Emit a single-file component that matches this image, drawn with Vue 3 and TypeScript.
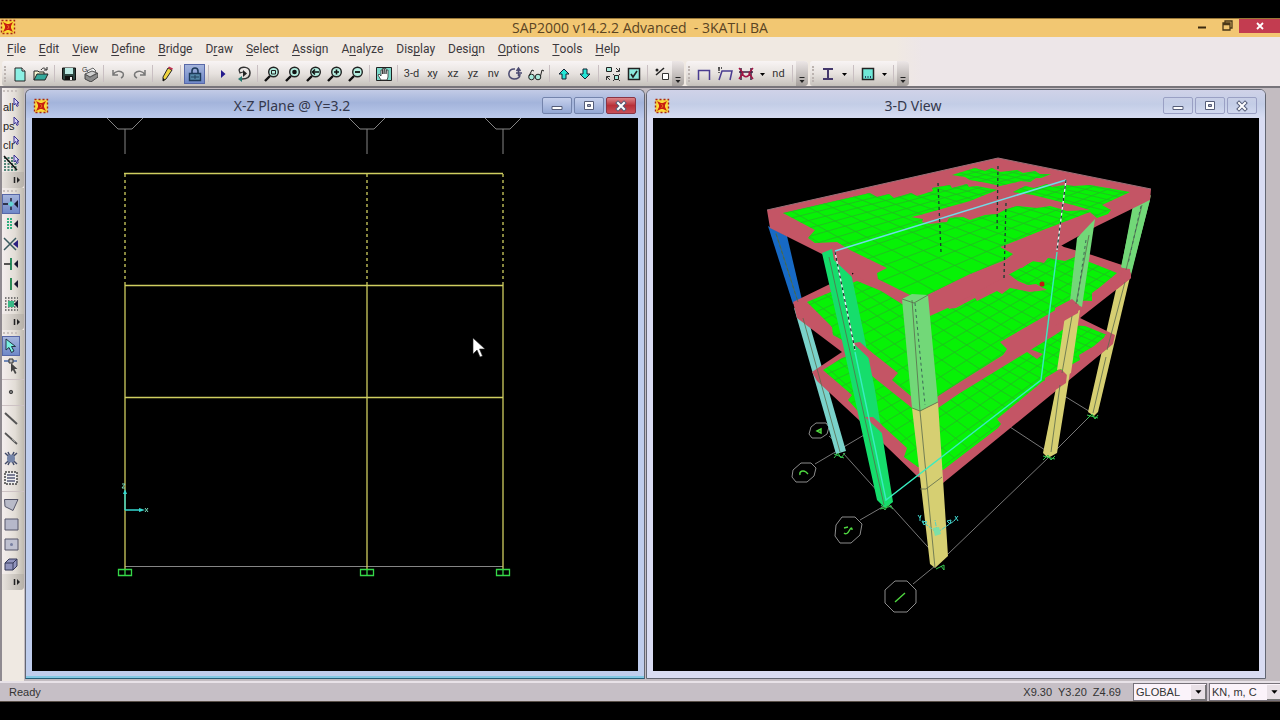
<script setup lang="ts">
import { ref } from 'vue'

type Tool = { id: string; label: string; icon?: string; text?: string; kind?: 'sep' | 'drop'; on?: boolean; narrow?: boolean }
type Point = [number, number]

const sep = (id: string): Tool => ({ id, label: '', kind: 'sep' })
const drop = (id: string): Tool => ({ id, label: 'More choices', kind: 'drop' })

const lens = (inner: string) =>
  `<path d="M6 10 1 15" stroke="#111" stroke-width="2.4"/><circle cx="9.5" cy="6" r="4.8" fill="#b5eee0" stroke="#222" stroke-width="1.4"/>${inner}`
const pick =
  '<path d="M11 0v7l1.500-1.500 1.500 3 1.300-1-1.300-2.500h2z" fill="#d8d4f8" stroke="#3a3290" stroke-width="1"/>'

const menus: [string, string, string][] = [
  ['', 'F', 'ile'], ['', 'E', 'dit'], ['', 'V', 'iew'], ['', 'D', 'efine'], ['', 'B', 'ridge'], ['D', 'r', 'aw'], ['', 'S', 'elect'],
  ['', 'A', 'ssign'], ['A', 'n', 'alyze'], ['Dis', 'p', 'lay'], ['Desi', 'g', 'n'], ['', 'O', 'ptions'], ['', 'T', 'ools'], ['', 'H', 'elp'],
]

const toolGroups: Tool[][] = [
  [
    { id: 'new', label: 'New model', icon: '<path d="M3 2h7l3 3v10H3z" fill="#8cf0e4" stroke="#222"/><path d="M10 2v3h3" fill="#fff" stroke="#222"/>' },
    { id: 'open', label: 'Open', icon: '<path d="M1 14V5h4l1 1h5v2" fill="#f4f4d0" stroke="#222"/><path d="M1 14l3-6h11l-3 6z" fill="#35a89a" stroke="#222"/><path d="M8 4c2-3 4-2 5-.5M14 1v3h-3" fill="none" stroke="#222"/>' },
    sep('s1'),
    { id: 'save', label: 'Save', icon: '<path d="M1.500 2h13v12h-12l-1-1z" fill="#2d4540" stroke="#111"/><path d="M4 2h8v6H4z" fill="#b9e9e2"/><path d="M4 10h8v4H4z" fill="#111"/><path d="M9 11h2v3H9z" fill="#eee"/>' },
    { id: 'print', label: 'Print', icon: '<path d="M5 5l6-3 3 3-5 4z" fill="#f3f3f3" stroke="#666"/><path d="M3 8l5 3 8-4v4l-7 5-6-3z" fill="#8b8b8b" stroke="#444"/><path d="M3 8l7-3 5 2-7 4z" fill="#cfcfcf" stroke="#555"/><text x="0" y="6" font-size="7" font-family="Liberation Sans, sans-serif" fill="#333">G</text>' },
    sep('s2'),
    { id: 'undo', label: 'Undo', icon: '<path d="M3 4v5h5M3 9c2-4 7-5 10-2 1 2 0 4-2 5" fill="none" stroke="#777" stroke-width="1.500"/>' },
    { id: 'redo', label: 'Redo', icon: '<path d="M14 4v5H9M14 9C12 5 7 4 4 7 3 9 4 11 6 12" fill="none" stroke="#777" stroke-width="1.500"/>' },
    sep('s3'),
    { id: 'pencil', label: 'Edit', icon: '<path d="M9 2l4 2-6 9-3 2v-4z" fill="#f0d440" stroke="#222"/><path d="M9 2l1-1.500 4 2L13 4z" fill="#c03050"/><path d="M4 15v-3l2 1.500z" fill="#111"/>' },
    sep('s4'),
    { id: 'lock', label: 'Lock model', on: true, icon: '<path d="M5 8V5c0-4 6-4 6 0v3" fill="none" stroke="#1d3a5a" stroke-width="1.600"/><path d="M2.500 7.500h11v7h-11z" fill="#5688a8" stroke="#1d3a5a" stroke-width="1.400"/><path d="M8 9v4M4 11h8" stroke="#23405c"/>' },
    sep('s5'),
    { id: 'run', label: 'Run analysis', icon: '<path d="M6 4l4.500 4L6 12z" fill="#241a8c"/>' },
    { id: 'animate', label: 'Run animation', icon: '<path d="M3 4c2-4 11-4 11 3 0 5-4 6-8 6" fill="none" stroke="#333" stroke-width="1.500"/><path d="M3 4l1 3 3-1" fill="none" stroke="#333" stroke-width="1.300"/><path d="M7 4l4 3.500L7 11z" fill="#222"/><path d="M2 13l4-3v6z" fill="#27776d"/>' },
    sep('s6'),
    { id: 'zoom-window', label: 'Zoom window', icon: lens('<path d="M7.500 4.500h4v3.500h-4z" fill="none" stroke="#222"/>') },
    { id: 'zoom-full', label: 'Restore full view', icon: lens('<circle cx="9.500" cy="6" r="2.300" fill="#111"/>') },
    { id: 'zoom-previous', label: 'Previous zoom', icon: lens('<path d="M13 6H7M9 3.500 6.500 6 9 8.500" fill="none" stroke="#111" stroke-width="1.500"/>') },
    { id: 'zoom-in', label: 'Zoom in', icon: lens('<path d="M7 6h5M9.500 3.500v5" stroke="#111" stroke-width="1.600"/>') },
    { id: 'zoom-out', label: 'Zoom out', icon: lens('<path d="M7 6h5" stroke="#111" stroke-width="1.800"/>') },
    sep('s7'),
    { id: 'pan', label: 'Pan', icon: '<path d="M.5 1.500h15v13H.5z" fill="#7ad8c8" stroke="#222"/><path d="M5 14 2 9l1-1 2 2V4h1.500v4V2.500H8V8l.5-5.500H10V8l.5-4H12v7l-1 3z" fill="#fff" stroke="#333" stroke-width=".8"/>' },
    sep('s8'),
    { id: 'v3d', label: '3-D view', text: '3-d' },
    { id: 'vxy', label: 'XY view', text: 'xy' },
    { id: 'vxz', label: 'XZ view', text: 'xz', narrow: true },
    { id: 'vyz', label: 'YZ view', text: 'yz', narrow: true },
    { id: 'vnv', label: 'Named view', text: 'nv' },
    { id: 'rotate', label: 'Rotate view', icon: '<path d="M8 3C0 2 0 13 7 13c4 0 6-2 6-5" fill="none" stroke="#4a4a70" stroke-width="1.500"/><path d="M9 7h6M11.500 3v7M9.500 5l2-3 2 3" fill="none" stroke="#4a4a70" stroke-width="1.500"/>' },
    { id: 'perspective', label: 'Perspective', icon: '<circle cx="3.500" cy="11" r="2.800" fill="#a6e8da" stroke="#222"/><circle cx="10" cy="11" r="2.800" fill="#a6e8da" stroke="#222"/><path d="M1 10 4 4l2 1M12.500 10l1.500-6 2 1" fill="none" stroke="#222"/>' },
    sep('s9'),
    { id: 'up', label: 'Move up', icon: '<path d="M8 3l5 5h-3v5H6V8H3z" fill="#25e5d5" stroke="#123"/>' },
    { id: 'down', label: 'Move down', icon: '<path d="M8 13l5-5h-3V3H6v5H3z" fill="#25e5d5" stroke="#123"/>' },
    sep('s10'),
    { id: 'shrink', label: 'Object shrink', icon: '<path d="M1.500 1.500h5v4h-5zM9.500 9.500h4v4h-4z" fill="#a6e8da" stroke="#222"/><path d="M11 2l3 3M14.500 2v3.500H11M5 14l-3-3M1.500 14v-3.500H5" fill="none" stroke="#333"/><path d="M8 8l1.500 1.500M15 8l-1.500 1.500M8 15l1.500-1.500M15 15l-1.500-1.500" stroke="#333"/>' },
    { id: 'options', label: 'Display options', icon: '<path d="M2.500 2.500h11v11h-11z" fill="#8ceade" stroke="#222" stroke-width="1.500"/><path d="M5 8l2 3 4-6" fill="none" stroke="#222" stroke-width="1.600"/>' },
    sep('s11'),
    { id: 'assign', label: 'Assign to group', icon: '<path d="M10 2 2 9" stroke="#222" stroke-width="1.500"/><circle cx="3" cy="4" r="1.500" fill="#222"/><path d="M8.500 7.500h6v6h-6z" fill="#fff" stroke="#333"/>' },
  ],
  [
    { id: 'undeformed', label: 'Undeformed shape', icon: '<path d="M2.500 14V4.500h11V14" fill="none" stroke="#4a3c90" stroke-width="1.500"/>' },
    { id: 'deformed', label: 'Deformed shape', icon: '<path d="M2 14 5 5h10l-2 9" fill="none" stroke="#4a3c90" stroke-width="1.500"/><path d="M1 2h4M2 3v4" stroke="#222" stroke-width="1.300" stroke-dasharray="2 1"/>' },
    { id: 'forces', label: 'Frame forces', icon: '<path d="M3 2v12M13 2v12M1 6h14" stroke="#3a2040" stroke-width="1.500"/><path d="M1 2l4 5-4 6M15 2l-4 5 4 6M4 7c2 5 6 5 8 0" fill="none" stroke="#a31545" stroke-width="1.400"/>' },
    drop('d1'),
    { id: 'nd', label: 'Named display', text: 'nd' },
    sep('s12'),
  ],
  [
    { id: 'frame', label: 'Steel frame design', icon: '<path d="M3 3h10M3 13h10M8 3v10" stroke="#44386c" stroke-width="2"/>' },
    drop('d2'),
    sep('s13'),
    { id: 'concrete', label: 'Concrete frame design', icon: '<path d="M2.500 2.500h11v11h-11z" fill="#6fe8d8" stroke="#222" stroke-width="1.500"/><path d="M5 11h1M7.500 11h1M10 11h1" stroke="#114" stroke-width="1.500"/>' },
    drop('d3'),
    sep('s14'),
  ],
]

const tag = (t: string) => `<text x="0" y="13" font-size="11" font-family="Liberation Sans, sans-serif" fill="#222">${t}</text>${pick}`
const node = '<path d="M15 4v8l-4-4z" fill="#181830"/>'
const sideGroups: Tool[][] = [
  [
    { id: 'all', label: 'Select all', icon: tag('all') },
    { id: 'ps', label: 'Previous selection', icon: tag('ps') },
    { id: 'clr', label: 'Clear selection', icon: tag('clr') },
    { id: 'line-select', label: 'Select by line', icon: '<path d="M1 3h13M1 6h13M1 9h13M1 12h13M1 15h13" stroke="#1c6656" stroke-width="1.500" stroke-dasharray="2 1.500"/><path d="M1 1l13 14" stroke="#111" stroke-width="1.500"/>' + pick },
  ],
  [
    { id: 'snap-joint', label: 'Snap to points', on: true, icon: '<path d="M0 8h5M8 2v4M8 10v4" stroke="#112" stroke-width="1.300"/><path d="M8 5l3 3-3 3-3-3z" fill="#62d4d4"/>' + node },
    { id: 'snap-mid', label: 'Snap to ends', icon: '<path d="M5 2v12M8 2v12" stroke="#30b080" stroke-width="2" stroke-dasharray="2 1"/>' + node },
    { id: 'snap-cross', label: 'Snap to intersections', icon: '<path d="M1 2l12 12M1 14 13 2" stroke="#3a5a60" stroke-width="1.500"/><path d="M15 4v8l-5-4z" fill="#2b2080"/>' },
    { id: 'snap-perp', label: 'Snap perpendicular', icon: '<path d="M1 8h7" stroke="#222" stroke-width="1.500"/><path d="M8 2v12" stroke="#178050" stroke-width="1.800"/>' + node },
    { id: 'snap-line', label: 'Snap to lines', icon: '<path d="M8 2v12" stroke="#188048" stroke-width="1.800"/>' + node },
    { id: 'snap-grid', label: 'Snap to fine grid', icon: '<path d="M2 2h13M2 5h13M2 8h13M2 11h13M2 14h13" stroke="#555" stroke-width="1.500" stroke-dasharray="1.500 1.500"/><path d="M5 5h6v6H5z" fill="#38b886"/>' + node },
  ],
  [
    { id: 'pointer', label: 'Pointer', on: true, icon: '<path d="M3 1v11l3-2.500 2.500 5 2.500-1.500-2.500-4.500h4z" fill="#79f0e0" stroke="#234"/>' },
    { id: 'reshape', label: 'Reshape', icon: '<path d="M1 3h13" stroke="#4668a8" stroke-width="1.500"/><path d="M6 1h4v4H6z" fill="#bbb" stroke="#333"/><path d="M8 5v9l2-2 2 4 1.500-1-2-4h3z" fill="#444"/>' },
    sep('t1'),
    { id: 'joint', label: 'Draw joint', icon: '<circle cx="8" cy="8" r="1.700" fill="#777" stroke="#444"/>' },
    sep('t2'),
    { id: 'draw-frame', label: 'Draw frame', icon: '<path d="M2 3l12 11" stroke="#555" stroke-width="2"/>' },
    { id: 'quick-frame', label: 'Quick draw frame', icon: '<path d="M2 3l12 11" stroke="#555" stroke-width="1.700"/><path d="M9 9l3 3" stroke="#999"/>' },
    { id: 'braces', label: 'Quick draw braces', icon: '<path d="M2 3l12 11M2 14 14 3M5 2l6 13M11 2 5 15" stroke="#424a68" stroke-width="1.500"/><circle cx="8" cy="8.500" r="4" fill="#7484a8"/>' },
    { id: 'secondary', label: 'Quick draw secondary beams', icon: '<path d="M2 2h12v12H2z" fill="#eee" stroke="#444" stroke-width="1.500" stroke-dasharray="2 1"/><path d="M4 5h8M4 8h8M4 11h8" stroke="#555a78" stroke-width="1.400"/>' },
    sep('t3'),
    { id: 'poly', label: 'Draw polygon area', icon: '<path d="M1.500 3.500H15L10 14.500 2 10.500z" fill="#b8bac8" stroke="#555568"/>' },
    { id: 'rect', label: 'Draw rectangular area', icon: '<path d="M2 3h13v11H2z" fill="#b6b8ca" stroke="#555568"/>' },
    { id: 'quick-area', label: 'Quick draw area', icon: '<path d="M2 3h13v11H2z" fill="#bfc1d0" stroke="#555568"/><circle cx="8.500" cy="8.500" r="1.500" fill="#777fa0"/>' },
    { id: 'solid', label: 'Draw solid', icon: '<path d="M2 7l4-4h8v7l-4 4H2z" fill="#9093bc" stroke="#353858"/><path d="M2 7h8v7M10 7l4-4" fill="none" stroke="#353858"/>' },
  ],
]

// Square-to-quad projection used for the slab mesh.
function meshPath(quad: Point[], nu: number, nv: number): string {
  const [[x0, y0], [x1, y1], [x2, y2], [x3, y3]] = quad
  const dx1 = x1 - x2, dx2 = x3 - x2, sx = x0 - x1 + x2 - x3
  const dy1 = y1 - y2, dy2 = y3 - y2, sy = y0 - y1 + y2 - y3
  const det = dx1 * dy2 - dx2 * dy1
  const g = (sx * dy2 - dx2 * sy) / det
  const h = (dx1 * sy - sx * dy1) / det
  const at = (u: number, v: number) => {
    const w = g * u + h * v + 1
    const x = ((x1 - x0 + g * x1) * u + (x3 - x0 + h * x3) * v + x0) / w
    const y = ((y1 - y0 + g * y1) * u + (y3 - y0 + h * y3) * v + y0) / w
    return `${x.toFixed(1)} ${y.toFixed(1)}`
  }
  let d = ''
  for (let i = 0; i <= nu; i++) d += `M${at(i / nu, 0)}L${at(i / nu, 1)}`
  for (let j = 0; j <= nv; j++) d += `M${at(0, j / nv)}L${at(1, j / nv)}`
  return d
}

const slabs = [
  {
    id: 'first',
    outline: 'M812 372 842 352 900 330 1050 300 1080 318 1115 335 1113 344 1068 381 943 483 918 477 860 421 817 381Z',
    shell: 'M823 370 842 358 900 340 1000 346 1027 352 1037 359 1043 354 1030 349 1060 325 1085 326 1107 335 1094 346 1079 355 1080 360 1060 371 1042 382 997 419 1001 424 998 428 960 457 943 470 918 467 904 457 907 448 873 417 857 410 848 400 852 395Z',
    mesh: meshPath([[812, 372], [1000, 290], [1115, 336], [925, 480]], 20, 13),
  },
  {
    id: 'second',
    outline: 'M793 302 828 285 1000 210 1064 247 1092 255 1131 268 1131 278 1080 318 1055 335 960 393 938 408 912 408 842 352 797 318Z',
    shell: 'M807 302 857 281 930 311 947 305 949 309 956 308 975 298 977 301 997 291 1002 294 1010 288 1030 292 1047 290 1036 284 1028 285 1018 281 1010 275 1004 272 1012 266 1022 268 1032 261 1044 263 1048 258 1065 261 1075 257 1092 263 1117 273 1100 287 1092 293 1092 301 1073 300 1000 342 1007 349 1003 355 960 382 935 398 912 397 892 380 898 373 860 343 848 343 833 335 832 327Z',
    mesh: meshPath([[793, 302], [1000, 215], [1131, 270], [925, 404]], 20, 13),
  },
  {
    id: 'roof',
    outline: 'M767 210 998 158 1151 189 1150 200 1097 226 1077 237 950 307 930 316 902 304 822 254 770 228Z',
    shell: 'M783 213 870 193 877 197 889 194 894 198 911 193 917 196 933 191 932 188 950 185 952 188 967 184 969 187 977 186 997 190 970 201 920 215 903 219 911 217 923 219 922 222 930 224 947 222 949 218 963 217 970 220 985 215 997 214 1007 209 1017 206 1037 208 1050 206 1067 211 1090 210 1073 205 1033 195 1013 192 1025 186 1034 188 1047 184 1052 187 1065 185 1074 186 1090 185 1130 192 1102 205 1111 210 1108 214 1097 218 1090 212 1043 230 1000 247 1013 254 1005 260 970 274 927 295 910 295 878 279 877 273 887 268 850 250 837 242 815 243 808 238 815 230Z M952 175 975 168 985 171 992 168 1000 172 1017 170 1023 173 1035 171 1040 174 1051 174 1041 178 1036 178 1030 182 1021 181 1000 186 987 183 970 180 965 177Z',
    mesh: meshPath([[767, 211], [998, 158], [1151, 190], [914, 301]], 20, 13),
  },
]

const gridLines = [125, 367, 503]
const bubbles = [
  { id: 'one', d: 'M895 581h12l9 9v13l-9 9h-13l-9-9v-13z', mark: 'M895 602l10-9' },
  { id: 'two', d: 'M842 517h13l7 7-2 11-9 8h-11l-5-7 1-11z', mark: 'M844 533c2 2 4 0 5-2s3-5 3-1M844 528l4-1' },
  { id: 'three', d: 'M801 463h10l5 5-2 8-7 6h-11l-4-5 1-7z', mark: 'M800 475c-1-4 3-5 6-3l2 2' },
  { id: 'four', d: 'M816 423h10l3 4-2 7-6 4h-9l-3-4 2-7z', mark: 'M817 431l4-2v4z' },
]

const system = ref('GLOBAL')
const units = ref('KN, m, C')
</script>

<template>
  <div class="app">
    <header class="titlebar">
      <svg class="logo" viewBox="0 0 16 16"><use href="#sap-logo" /></svg>
      <h1>SAP2000 v14.2.2 Advanced&nbsp; - 3KATLI BA</h1>
      <div class="caption">
        <button aria-label="Minimize"><svg viewBox="0 0 16 16"><path d="M4 9.500h8" stroke="#3b2a10" stroke-width="2" /></svg></button>
        <button aria-label="Restore"><svg viewBox="0 0 16 16"><path d="M4 5h7v7H4z M4 6.500h7M6 5V3h7v7h-2" fill="none" stroke="#4a3818" stroke-width="1.300" /></svg></button>
        <button class="quit" aria-label="Close"><svg viewBox="0 0 16 16"><path d="M5 5l6 6M11 5l-6 6" stroke="#fff" stroke-width="1.800" /></svg></button>
      </div>
    </header>

    <nav class="menubar">
      <button v-for="m in menus" :key="m.join('')">{{ m[0] }}<u>{{ m[1] }}</u>{{ m[2] }}</button>
    </nav>

    <div class="toolbars">
      <div v-for="(group, g) in toolGroups" :key="g" class="toolbar">
        <i class="grip"></i>
        <template v-for="t in group" :key="t.id">
          <i v-if="t.kind === 'sep'" class="sep"></i>
          <button v-else-if="t.kind === 'drop'" class="drop" :aria-label="t.label"><svg viewBox="0 0 10 10"><path d="M3 4h5L5.500 7z" /></svg></button>
          <button v-else class="tool" :class="{ on: t.on, narrow: t.narrow }" :aria-label="t.label" :title="t.label">
            <svg v-if="t.icon" viewBox="0 0 16 16" v-html="t.icon"></svg>
            <span v-else>{{ t.text }}</span>
          </button>
        </template>
        <button class="more" aria-label="Toolbar options"><svg viewBox="0 0 10 10"><path d="M2.500 2.500h5" stroke="#222" /><path d="M2.500 5h5L5 8z" fill="#222" /></svg></button>
      </div>
    </div>

    <main class="workspace">
      <aside class="side">
        <div v-for="(group, g) in sideGroups" :key="g" class="rack">
          <i class="grip"></i>
          <template v-for="t in group" :key="t.id">
            <i v-if="t.kind === 'sep'" class="sep"></i>
            <button v-else class="tool" :class="{ on: t.on }" :aria-label="t.label" :title="t.label"><svg viewBox="0 0 16 16" v-html="t.icon"></svg></button>
          </template>
          <button class="more" aria-label="Toolbar options"><svg viewBox="0 0 10 10"><path d="M2.500 2v6" stroke="#222" stroke-width="1.500" /><path d="M5 2v6l3-3z" fill="#222" /></svg></button>
        </div>
      </aside>

      <section class="pane active">
        <header>
          <svg class="logo" viewBox="0 0 16 16"><use href="#sap-logo" /></svg>
          <h2>X-Z Plane @ Y=3.2</h2>
          <div class="controls">
            <button aria-label="Minimize"><svg viewBox="0 0 16 16"><use href="#ico-min" /></svg></button>
            <button aria-label="Maximize"><svg viewBox="0 0 16 16"><use href="#ico-max" /></svg></button>
            <button class="shut" aria-label="Close"><svg viewBox="0 0 16 16"><use href="#ico-x" /></svg></button>
          </div>
        </header>
        <svg class="scene" viewBox="32 118 606 553">
          <g fill="none" stroke="#858585">
            <path v-for="x in gridLines" :key="x" :d="`M${x - 18} 118l11 11h14l11-11M${x} 129v25`" />
            <path d="M125 566.500h378" />
          </g>
          <g fill="none" stroke="#cfce60" stroke-width="1.300">
            <path d="M124 173.500h379M125 285.500h378M125 397.500h378" />
            <path v-for="x in gridLines" :key="x" :d="`M${x} 285v284`" />
            <path v-for="x in gridLines" :key="x" :d="`M${x} 174v111`" stroke-dasharray="3 3" />
          </g>
          <path v-for="x in gridLines" :key="x" :d="`M${x - 6.5} 569.500h13v6h-13zM${x} 569v6`" fill="none" stroke="#35d848" stroke-width="1.300" />
          <path d="M125 510v-18M125 510h17" stroke="#35d8d0" stroke-width="1.300" />
          <path d="M125 489l2 5h-4zM145 510l-6-2v4z" fill="#35d8d0" />
          <path d="M122 484h3l-3 4h3M145 508l3 4M148 508l-3 4" fill="none" stroke="#7ad8b8" />
          <path d="M473 338v16l4-4 3 7 2.500-1-3-7h5.500z" fill="#fff" stroke="#222" stroke-width=".6" />
        </svg>
      </section>

      <section class="pane">
        <header>
          <svg class="logo" viewBox="0 0 16 16"><use href="#sap-logo" /></svg>
          <h2>3-D View</h2>
          <div class="controls">
            <button aria-label="Minimize"><svg viewBox="0 0 16 16"><use href="#ico-min" /></svg></button>
            <button aria-label="Maximize"><svg viewBox="0 0 16 16"><use href="#ico-max" /></svg></button>
            <button aria-label="Close"><svg viewBox="0 0 16 16"><use href="#ico-x" /></svg></button>
          </div>
        </header>
        <svg class="scene" viewBox="653 118 606 553">
          <defs>
            <clipPath v-for="s in slabs" :id="`shell-${s.id}`" :key="s.id"><path :d="s.shell" /></clipPath>
          </defs>
          <path d="M815 464 864 435M843 453 936 556M860 520 886 505M913 584 935 566M948 554 1048 458 1092 414M1010 427 1048 452M1066 397 1092 413M829 436 836 442" fill="none" stroke="#777" />
          <g v-for="b in bubbles" :key="b.id" fill="none">
            <path :d="b.d" stroke="#8c8c8c" />
            <path :d="b.mark" stroke="#4fd840" stroke-width="1.400" />
          </g>

          <path d="M768 226 787 236 802 300 793 304Z" fill="#1769c4" />
          <path d="M794 308 806 312 846 451 836 454Z" fill="#7ad2ca" />
          <path d="M1133 205 1151 195 1131 275 1121 269Z" fill="#72d878" />
          <path d="M1117 285 1130 277 1098 412 1094 416 1088 412Z" fill="#d6cf72" />

          <template v-for="s in slabs" :key="s.id">
            <path :d="s.outline" fill="#c45565" />
            <path :d="s.shell" fill="#07f206" />
            <path :d="s.mesh" :clip-path="`url(#shell-${s.id})`" fill="none" stroke="#22bd22" stroke-width=".9" />
            <template v-if="s.id === 'first'">
              <path d="M1058 378 1070 372 1057 453 1048 458 1043 453Z" fill="#d6cf72" />
              <path d="M1045 378 1060 369 1067 374 1066 383 1045 397Z" fill="#c45565" />
            </template>
            <path v-if="s.id === 'second'" d="M1065 316 1080 310 1071 373 1067 375 1061 369 1057 370Z" fill="#d6cf72" />
          </template>

          <path d="M1077 238 1095 219 1082 307 1070 301Z" fill="#72d878" />
          <path d="M1133 210 1150 200 1131 273 1121 267Z" fill="#72d878" />
          <path d="M1055 308 1072 299 1079 305 1078 313 1055 326Z" fill="#c45565" />
          <path d="M1123 268 1130 269 1131 278 1116 290ZM1105 335 1113 336 1112 344 1098 356Z" fill="#c45565" />

          <path d="M822 253 832 249 851 273 863 330 875 390 893 502 885 508 877 500 843 345Z" fill="#16dd6c" />
          <path d="M831 243 838 243 852 258 852 277 834 260ZM853 343 860 342 872 353 874 363ZM865 417 873 417 882 425 883 434Z" fill="#c45565" />
          <path d="M902 299 912 294 928 295 938 402 920 411 912 408Z" fill="#72d878" />
          <path d="M912 408 920 411 938 402 948 556 935 568 930 564Z" fill="#d6cf72" />
          <path d="M902 299 914 303 928 295M912 300 920 411 935 568M912 408 920 411 938 402M920 489 926 489 942 477M829 257 884 505M776 233 798 302M803 318 840 452M1089 235 1076 304M1072 316 1062 373M1060 385 1051 452M1142 205 1126 270M1125 282 1107 350M1106 357 1093 413" fill="none" stroke="#5b6a4c" stroke-width=".8" />

          <path d="M767 210 998 158 1151 189" fill="none" stroke="#9a7078" />
          <path d="M835 251 1066 180" fill="none" stroke="#70dce8" stroke-width="1.500" />
          <path d="M1057 252 1041 380 886 500 855 352" fill="none" stroke="#38ecc0" stroke-width="1.400" />
          <g fill="none" stroke-width="1.300">
            <path d="M1066 180 1057 250M835 252 855 350" stroke="#e8f4f4" />
            <path d="M1066 180 1057 250M835 252 855 350M938 183 941 252M998 166 997 232M1006 203 1004 278" stroke="#1a3a30" stroke-dasharray="3 3" />
            <path d="M776 234 798 302M915 303 925 405M1086 240 1077 302M1141 206 1128 264" stroke="#3d6a58" stroke-width="1" stroke-dasharray="3 3" />
          </g>
          <circle cx="1042" cy="284" r="2.500" fill="#c01810" />

          <path d="M834 454l10 4M834 458l4-5 3 5 4-5M880 509l12-3M881 505l4 5 3-5 5 4M1043 460l5-5 3 5 4-4 M1043 456l12 3M1087 419l5-5 3 5 3-4M1087 415l11 3M936 569l8-4v5l-3-4" fill="none" stroke="#36c850" />
          <path d="M936 532 923 522M938 532 954 521M937 531 935 520" stroke="#4fd0c8" stroke-dasharray="4 1" />
          <path d="M918 515l2 3 1-3M920 518v3M955 516l3 5M958 516l-4 5M922 521l5 1-3 3zM951 520l-4 1 3 3z" fill="none" stroke="#40d8d0" />
          <path d="M933 528l6-1 2 7-6 2z" fill="#7ce0a8" />
        </svg>
      </section>
    </main>

    <footer class="status">
      <p>Ready</p>
      <output>X9.30&nbsp; Y3.20&nbsp; Z4.69</output>
      <span class="combo">
        <select v-model="system" aria-label="Coordinate system"><option>GLOBAL</option></select>
        <svg viewBox="0 0 14 16"><path d="M4 6h7l-3.500 4z" /></svg>
      </span>
      <span class="combo last">
        <select v-model="units" aria-label="Units"><option>KN, m, C</option></select>
        <svg viewBox="0 0 14 16"><path d="M4 6h7l-3.500 4z" /></svg>
      </span>
    </footer>

    <svg class="symbols" aria-hidden="true">
      <symbol id="sap-logo" viewBox="0 0 16 16">
        <path d="M1.500 1.500h13v13h-13z" fill="#fbd93a" stroke="#a82418" stroke-width="1.400" stroke-dasharray="2 2" />
        <path d="M3 3l4 2h2l4-2-2 4v2l2 4-4-2H7l-4 2 2-4V7z" fill="#c81e10" />
        <path d="M7.500 6 9 8l-1.500 2" fill="none" stroke="#f08a20" stroke-width=".8" />
      </symbol>
      <symbol id="ico-min" viewBox="0 0 16 16"><path d="M3 8.500h10v3H3z" fill="#fff" stroke="#555d78" /></symbol>
      <symbol id="ico-max" viewBox="0 0 16 16"><path d="M3.500 3.500h9v8h-9z" fill="#fff" stroke="#555d78" /><path d="M6.500 6.500h3v2h-3z" fill="#aab" stroke="#555d78" /></symbol>
      <symbol id="ico-x" viewBox="0 0 16 16"><path d="M5 5l6 6M11 5l-6 6" stroke="#555d78" stroke-width="4" stroke-linecap="square" /><path d="M5 5l6 6M11 5l-6 6" stroke="#fff" stroke-width="2" stroke-linecap="square" /></symbol>
    </svg>
  </div>
</template>

<style>
body {
  margin: 0;
  background: #000;
}
</style>

<style scoped>
.app {
  box-sizing: border-box;
  height: 100vh;
  padding: 18px 0;
  display: flex;
  flex-direction: column;
  overflow: hidden;
  background: #000;
  color: #333;
  font-family: Roboto, "Liberation Sans", sans-serif;
  font-size: 12px;
}
button {
  border: 0;
  margin: 0;
  padding: 0;
  background: none;
  color: inherit;
  font: inherit;
  display: flex;
  align-items: center;
  justify-content: center;
}
h1,
h2,
p {
  margin: 0;
  font-weight: 400;
}
.symbols {
  display: none;
}
.logo {
  width: 16px;
  height: 16px;
}
.titlebar {
  flex: none;
  height: 19px;
  box-sizing: border-box;
  border-top: 1px solid #9a7838;
  display: grid;
  grid-template-columns: 1fr auto 1fr;
  background: #f2c772;
}
.titlebar h1 {
  font: 14px/17px "Open Sans", sans-serif;
  color: #5a4423;
}
.caption {
  display: flex;
  justify-self: end;
  height: 14px;
}
.caption button {
  width: 25px;
}
.caption svg {
  width: 16px;
  height: 16px;
}
.caption .quit {
  width: 41px;
  background: #c33c50;
}
.menubar {
  flex: none;
  height: 24px;
  padding-left: 7px;
  display: flex;
  gap: 13px;
  background: linear-gradient(90deg, #f0e9e2 70%, #ede6e8 72%);
}
.menubar button {
  color: #3c383c;
  white-space: pre;
}
.menubar u {
  text-underline-offset: 2px;
}
.toolbars {
  flex: none;
  height: 27px;
  box-sizing: border-box;
  padding-left: 2px;
  border-bottom: 2px solid #77747a;
  display: flex;
  gap: 2px;
  background: linear-gradient(90deg, #f0e9e2 70%, #ede6e8 72%);
}
.toolbar {
  display: flex;
  align-items: center;
  border-radius: 3px 4px 4px 3px;
  background: linear-gradient(#f8f4f4, #e7e2df 50%, #c5c1bb);
}
.toolbar .grip {
  width: 2px;
  height: 16px;
  margin: 0 1px 0 2px;
  border-left: 2px dotted #bbb3b0;
}
.toolbar .sep {
  width: 1px;
  height: 17px;
  margin: 0 3px;
  background: #c9bfc2;
}
.tool {
  box-sizing: border-box;
  width: 21px;
  height: 20px;
  font-size: 11px;
}
.tool svg {
  width: 16px;
  height: 16px;
  fill: none;
}
.tool.narrow {
  width: 20px;
}
.tool.on {
  border: 1px solid #5868a8;
  background: linear-gradient(#a4b4dc, #6f88c8);
}
.drop {
  width: 12px;
  height: 20px;
}
.drop svg,
.more svg {
  width: 10px;
  height: 10px;
}
.toolbar .more {
  align-self: stretch;
  width: 12px;
  align-items: flex-end;
  padding-bottom: 1px;
  border-radius: 0 4px 4px 0;
  background: linear-gradient(#ece6e6, #a5a09c);
}
.workspace {
  flex: 1;
  min-height: 0;
  display: grid;
  grid-template-columns: 24px minmax(0, 1fr) minmax(0, 1fr);
  column-gap: 1px;
  padding-right: 14px;
  background: #c3bcc1;
}
.side {
  box-sizing: border-box;
  border-left: 2px solid #8f8a90;
  background: #efe9e2;
}
.rack {
  display: flex;
  flex-direction: column;
  border-radius: 0 0 4px 4px;
  background: linear-gradient(90deg, #f4eeee, #e2ddd6 60%, #bfbab0);
}
.side .grip {
  width: 14px;
  height: 0;
  margin: 2px 1px;
  border-top: 2px dotted #c9c1be;
}
.rack:first-child .grip {
  margin-bottom: 4px;
}
.side .tool {
  width: 18px;
}
.rack:first-child .tool {
  height: 19px;
}
.side .sep {
  height: 1px;
  margin: 3px 0 2px;
  background: #cdc2c4;
}
.side .more {
  height: 16px;
  justify-content: flex-end;
  padding-right: 2px;
  border-radius: 0 0 4px 0;
  background: linear-gradient(90deg, #e8e3de, #b5b0a8);
}
.pane {
  box-sizing: border-box;
  margin: 1px 0 2px;
  min-height: 0;
  display: flex;
  flex-direction: column;
  border: 1px solid #626672;
  border-radius: 6px 6px 0 0;
  padding: 0 6px 7px;
  background: #d9dcf2;
}
.pane.active {
  background: #bfcdec;
  border-bottom-color: #235e78;
  box-shadow: inset 0 -2px #83c8e4;
}
.pane header {
  flex: none;
  height: 28px;
  display: flex;
  align-items: center;
  margin: 0 -6px;
  padding: 0 8px 0 7px;
  border-radius: 5px 5px 0 0;
  background: linear-gradient(#d0d2e8, #c3cde6 50%, #d8ddf2);
}
.pane.active header {
  background: linear-gradient(#c3cbe6, #a3b4db 45%, #bccaec);
}
.pane h2 {
  flex: 1;
  padding-right: 7px;
  padding-top: 4px;
  text-align: center;
  font: 14px/20px "Noto Sans", sans-serif;
  color: #34384c;
}
.pane .logo {
  margin-top: 3px;
}
.controls {
  display: flex;
  gap: 2px;
}
.controls button {
  box-sizing: border-box;
  width: 30px;
  height: 17px;
  margin-top: 3px;
  border: 1px solid #9aa0c4;
  border-radius: 2px;
}
.controls svg {
  width: 16px;
  height: 16px;
}
.active .controls button {
  border-color: #7484ac;
  background: linear-gradient(#c6d0ec, #94a8d4);
}
.active .controls .shut {
  border-color: #8a3444;
  background: linear-gradient(#dc8488, #b83038 50%, #c85058);
}
.scene {
  flex: 1;
  min-height: 0;
  width: 100%;
  background: #000;
}
.status {
  flex: none;
  height: 21px;
  box-sizing: border-box;
  border-top: 2px solid #e8e2e8;
  border-bottom: 1px solid #5a5048;
  display: flex;
  align-items: center;
  background: #c6bfc6;
  font: 11px/16px "Liberation Sans", sans-serif;
}
.status p {
  flex: 1;
  padding-left: 9px;
}
.status output {
  margin-right: 12px;
}
.combo {
  box-sizing: border-box;
  width: 74px;
  height: 18px;
  margin-right: 2px;
  display: flex;
  border: 1px solid #77727a;
  background: #fbf3fa;
}
.combo.last {
  margin-right: -3px;
}
.combo select {
  flex: 1;
  min-width: 0;
  padding: 0 0 0 2px;
  border: 0;
  appearance: none;
  background: none;
  color: #333;
  font: inherit;
}
.combo svg {
  width: 14px;
  height: 14px;
  align-self: center;
  background: #e8e0e6;
  border-right: 1px solid #777;
  border-bottom: 1px solid #777;
  pointer-events: none;
}
</style>
